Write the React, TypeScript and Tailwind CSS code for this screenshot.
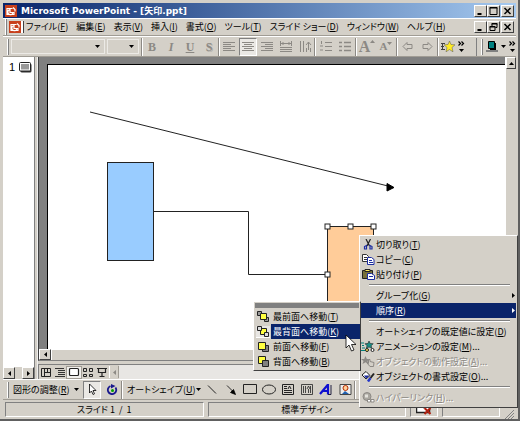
import React from "react";

const MENUS = [
  ["ファイル", "F"],
  ["編集", "E"],
  ["表示", "V"],
  ["挿入", "I"],
  ["書式", "O"],
  ["ツール", "T"],
  ["スライド ショー", "D"],
  ["ウィンドウ", "W"],
  ["ヘルプ", "H"],
];

const ICONS: Record<string, React.ReactNode> = {
  left: <path d="M1 1.5h12M1 3.5h8M1 5.5h12M1 7.5h8M1 9.5h12" stroke="#8c8984" />,
  center: <path d="M1 1.5h12M3 3.5h8M1 5.5h12M3 7.5h8M1 9.5h12" stroke="#8c8984" />,
  right: <path d="M1 1.5h12M5 3.5h8M1 5.5h12M5 7.5h8M1 9.5h12" stroke="#8c8984" />,
  spread: <path d="M1.5 0v5M12.5 0v5M2 2.5h10M4 1v3M10 1v3M1 6.5h12M1 8.5h12M1 10.5h12" stroke="#8c8984" />,
  vertical: <path d="M2.5 0v11M5.5 0v11M8.5 7v4M12.5 7v4M8 4l2.5-3L13 4M10.5 1v8" stroke="#8c8984" />,
  numbers: <path d="M2.5 0v3M1 5h3M1 9h3M6 1.5h7M6 5.5h7M6 9.5h7" stroke="#8c8984" />,
  bullets: <path d="M1 1.5h3M1 5.5h3M1 9.5h3M6 1.5h7M6 5.5h7M6 9.5h7" stroke="#8c8984" strokeWidth="1.3" />,
  prev: <path d="M2 5.5L6 1.5v2h5v4H6v2z" stroke="#8c8984" />,
  next: <path d="M12 5.5L8 1.5v2H3v4h5v2z" stroke="#8c8984" />,
  star: (
    <>
      <path d="M0 2.5h4M0 5.5h3M0 8.5h4M1.5 2v7" stroke="#404040" />
      <path
        d="M8.5 0l1.5 3.5 4 .3-3 2.7 1 4.3-3.500-2.300L5 10.800l1-4.300-3-2.700 4-.3z"
        fill="#ffec24"
        stroke="#555"
        strokeWidth=".5"
      />
    </>
  ),
  shadow: (
    <>
      <path d="M5 2h6v7H5z" fill="#000" />
      <path d="M3.5.5h6v7h-6z" fill="#008080" stroke="#000" />
      <path d="M1 10h12" stroke="#808080" strokeWidth="2" />
    </>
  ),
  pointer: <path d="M4.5 0v9l2-2 1.500 3.500 1.500-.7L8 6.500h3z" fill="#fff" stroke="#000" strokeWidth=".8" />,
  rotate: (
    <>
      <path d="M10.500 3.500a4.200 4.200 0 1 1-5-1.500" stroke="#18188c" strokeWidth="1.800" />
      <path d="M6 0l4.500 2L6 4.500z" fill="#18188c" />
      <circle cx="7.500" cy="6.500" r="1.500" fill="#00a000" />
    </>
  ),
  line: <path d="M3 1.5l8 8" stroke="#222" />,
  arrowLine: <path d="M3 1.5l6 6M11.500 10.500L6.500 8.500l3-3z" fill="#000" stroke="#000" strokeWidth=".8" />,
  rect: <path d="M.5.5h13v9H.5z" stroke="#222" />,
  oval: <ellipse cx="7" cy="5.5" rx="6.5" ry="4.5" stroke="#222" />,
  textBox: <path d="M1.5.5h11v10h-11zM3 8.5h8M3 6.5h8M3 4.5h3M3 2.5h3M7 5l1.500-3L10 5" stroke="#222" />,
  verticalBox: (
    <path d="M1.5.5h11v10h-11zM3.5 2v7M5.5 2v7M7 5l1.500-3L10 5M8.500 5v4M10.500 2v7" stroke="#222" strokeWidth=".8" />
  ),
  wordArt: (
    <>
      <path d="M1 10L9 .5v10M4 7h5" stroke="#1010d0" strokeWidth="2.2" />
      <path d="M12 1v9.5H9" stroke="#202040" />
    </>
  ),
  clip: (
    <>
      <path d="M2 .5h11v10H2z" fill="#eee" stroke="#444" />
      <circle cx="7.5" cy="4" r="2.5" fill="#ffcf9b" stroke="#b72d00" />
      <path d="M4 10l3-3 4 3z" fill="#2060b0" />
    </>
  ),
  cut: (
    <>
      <path d="M5 0l3.5 7M9.5 0L6 7" stroke="#222" strokeWidth="1.2" />
      <path d="M5.5 6.5L3.5 7.5v2.5h2zM9 6.5l2 1v2.5H9z" stroke="#1c2ca0" strokeWidth="1.2" />
    </>
  ),
  copy: (
    <>
      <path d="M1.5.5h4l2 2v5h-6zM3 3.5h3M3 5.5h3" fill="#fff" stroke="#333" />
      <path d="M6.5 3.5h4l2.500 2v5H6.500zM8 6.500h3M8 8.500h4" fill="#fff" stroke="#1c2ca0" />
    </>
  ),
  paste: (
    <>
      <path d="M1.5 1.5h10v8h-10z" fill="#77703a" stroke="#222" />
      <path d="M4 .5h5v2H4z" fill="#ffe95a" stroke="#222" />
      <path d="M6.5 4.5h4l3 2v4h-7zM8 7.5h4" fill="#fff" stroke="#1c2ca0" />
    </>
  ),
  animate: (
    <>
      <path d="M0 2h3M1 4.5h2M0 9.5h4M1 7h3" stroke="#00807a" strokeWidth="1.2" />
      <path
        d="M8 0l1.200 2.500 3 .2-2 2 .6 2.600L8 6 5.400 7.300 6 4.700 4 2.700l3-.2z"
        fill="#1b8f86"
        stroke="#222"
        strokeWidth=".6"
      />
      <circle cx="6" cy="9" r="1.5" fill="#ffe95a" stroke="#222" />
      <circle cx="11.5" cy="9" r="1.5" fill="#fff" stroke="#222" />
    </>
  ),
  action: (
    <>
      <path d="M4.5 0l1.300 3h3.200L6.500 5l1 3-3-1.800L1.500 8l1-3L0 3h3.200z" fill="#8c8984" />
      <path d="M7.5 3.5v4L6 7l3 3.500h3.500l.5-4-4-1v-2z" fill="#d4d0c8" stroke="#8c8984" />
    </>
  ),
  format: (
    <>
      <path d="M1 4l4-3.5 4 4L5 8z" fill="#fff" stroke="#222" />
      <path d="M3 4.5l2 3 3.500-3z" fill="#1c2ca0" />
      <path d="M13 2.5L9.5 7" stroke="#222" strokeWidth="2" />
      <path d="M9.5 7L7 10.5" stroke="#2436c8" strokeWidth="2.5" />
    </>
  ),
  link: (
    <>
      <circle cx="6" cy="4.5" r="4" fill="#aaa7a0" stroke="#8c8984" />
      <path d="M4 2.5h3v3H4z" fill="#e4e2dc" />
      <path d="M6.5 7.5h3v2.500h-3zM10 7.500h3v2.500h-3z" fill="#fff" stroke="#8c8984" />
    </>
  ),
  front: (
    <>
      <path d="M1.5.5h4v4h-4zM8.5 6.5h4v4h-4z" fill="#999" stroke="#222" />
      <path d="M4.5 2.5h6v6h-6z" fill="#ffff40" stroke="#222" />
    </>
  ),
  back: (
    <>
      <path d="M4.5 2.5h6v6h-6z" fill="#ffff40" stroke="#222" />
      <path d="M1.5.5h4v4h-4zM8.5 6.5h4v4h-4z" fill="#ddd" stroke="#222" />
    </>
  ),
  forward: (
    <>
      <path d="M6.5 4.5h6v6h-6z" fill="#808080" stroke="#222" />
      <path d="M2.5 1.5h7v7h-7z" fill="#ffff40" stroke="#222" />
    </>
  ),
  backward: (
    <>
      <path d="M2.5.5h7v7h-7z" fill="#ffff40" stroke="#222" />
      <path d="M6.5 4.5h6v6h-6z" fill="#808080" stroke="#222" />
    </>
  ),
  normalView: <path d="M2.5 1.5h9v8h-9zM5.5 2v7M6 5.5h6M8.5 2v3" stroke="#222" />,
  outlineView: <path d="M2 1.5h9M5 3.5h7M5 5.5h7M5 7.5h7M2 9.5h10" stroke="#333" />,
  slideView: <rect x="2.5" y="1.5" width="9" height="7" rx="1" fill="#fff" stroke="#222" strokeWidth="1.2" />,
  sorterView: <path d="M2.5 1.5h3v3h-3zM8.5 1.5h3v3h-3zM2.5 7.5h3v2h-3zM8.5 7.5h3v2h-3z" stroke="#222" />,
  showView: <path d="M2 1.5h10M3.5 1v4.500h7V1M7 6v3M4.500 9.500h5" stroke="#222" strokeWidth="1.2" />,
};

const Icon = ({ name }: { name: string }) => (
  <svg viewBox="0 0 14 11" fill="none" className="h-[11px] w-3.5 shrink-0">
    {ICONS[name]}
  </svg>
);

const Label = ({ text, hotkey, tail = "" }: { text: string; hotkey: string; tail?: string }) => (
  <span className="whitespace-nowrap">
    {text}(<u>{hotkey}</u>){tail}
  </span>
);

const AppIcon = () => (
  <svg viewBox="0 0 12 12" className="size-3 shrink-0">
    <rect width="12" height="12" fill="#c8401c" />
    <path
      d="M2 3.5h5.5M2 3v6.5h7V7M5 4.5v3h3a2.6 2.6 0 1 1-3-3zM8 2.5l2 2v2"
      fill="none"
      stroke="#fff"
      strokeWidth="1.2"
    />
  </svg>
);

const raised = "border border-t-white border-l-white border-r-[#404040] border-b-[#404040] bg-[#d4d0c8]";
const bar = "flex items-center border-t border-b border-t-white border-b-[#a09c94]";

const WindowButtons = ({ restore = false }: { restore?: boolean }) => (
  <div className="ml-auto flex shrink-0 items-center">
    <button aria-label="最小化" className={`h-3 w-[13px] ${raised}`}>
      <svg viewBox="0 0 10 10" className="size-full">
        <path d="M2 8h4" stroke="#000" strokeWidth="2" />
      </svg>
    </button>
    <button aria-label="元に戻す" className={`h-3 w-[13px] ${raised}`}>
      <svg viewBox="0 0 10 10" className="size-full" fill="none" stroke="#000">
        {restore ? (
          <path d="M3.5 4V1.5h5v4H7M1.5 4.5h5v4h-5zM1 5h6M3 2h6" />
        ) : (
          <path d="M1.5 1.5h7v7h-7zM1 2h8" />
        )}
      </svg>
    </button>
    <button aria-label="閉じる" className={`ml-px h-3 w-[13px] ${raised}`}>
      <svg viewBox="0 0 10 10" className="size-full">
        <path d="M2 2l6 6M8 2l-6 6" stroke="#000" strokeWidth="1.5" />
      </svg>
    </button>
  </div>
);

const Grip = () => <span className="h-4 w-0.5 shrink-0 border-r border-l border-r-[#808080] border-l-white" />;
const Divider = () => <span className="h-[18px] w-0.5 shrink-0 border-r border-l border-r-white border-l-[#8c8984]" />;

const Caret = ({ dir = "down", color = "#000" }: { dir?: "down" | "up" | "left" | "right"; color?: string }) => (
  <svg viewBox="0 0 5 5" className="size-[5px] shrink-0" fill={color}>
    {dir === "down" && <path d="M0 1h5L2.5 4z" />}
    {dir === "up" && <path d="M0 4h5L2.5 1z" />}
    {dir === "left" && <path d="M4 0v5L1 2.5z" />}
    {dir === "right" && <path d="M1 0v5l3-2.5z" />}
  </svg>
);

const More = () => (
  <button aria-label="その他のボタン" className="flex w-2 shrink-0 flex-col items-center gap-0.5">
    <svg viewBox="0 0 7 5" className="h-[5px] w-[7px]" fill="none" stroke="#000">
      <path d="M.5.5l2 2-2 2M3.5.5l2 2-2 2" strokeWidth="1.2" />
    </svg>
    <Caret />
  </button>
);

const Tool = ({ name, label, pressed = false }: { name: string; label: string; pressed?: boolean }) => (
  <button
    aria-label={label}
    aria-pressed={pressed}
    className={`flex h-[18px] w-[18px] shrink-0 items-center justify-center border ${
      pressed ? "border-t-[#808080] border-r-white border-b-white border-l-[#808080] bg-[#eae8e4]" : "border-transparent"
    }`}
  >
    <Icon name={name} />
  </button>
);

const Combo = ({ label, className }: { label: string; className: string }) => (
  <div className={`relative h-[15px] border border-[#eceae6] ${className}`}>
    <select aria-label={label} className="block size-full appearance-none bg-transparent" />
    <span className="pointer-events-none absolute top-1 right-1">
      <Caret />
    </span>
  </div>
);

const FormatToolbar = () => (
  <div className={`${bar} h-[21px] shrink-0`}>
    <div className="flex items-center gap-0.5 pl-1">
      <Grip />
      <Combo label="フォント" className="w-[94px]" />
      <Combo label="フォント サイズ" className="mr-0.5 w-8" />
    </div>
    <Divider />
    <div className="flex gap-px font-['Liberation_Serif',serif] text-xs leading-none font-bold text-[#8c8984]">
      <button className="w-[18px]">B</button>
      <button className="w-[18px] italic">I</button>
      <button className="w-[18px] underline">U</button>
      <button className="w-[18px] [text-shadow:1px_1px_0_#b5b2ac]">S</button>
    </div>
    <Divider />
    <div className="flex gap-px">
      <Tool name="left" label="左揃え" />
      <Tool name="center" label="中央揃え" pressed />
      <Tool name="right" label="右揃え" />
      <Tool name="spread" label="均等割り付け" />
      <Tool name="vertical" label="文字列の方向" />
    </div>
    <Divider />
    <div className="flex gap-px px-px">
      <Tool name="numbers" label="段落番号" />
      <Tool name="bullets" label="箇条書き" />
    </div>
    <Divider />
    <div className="flex items-center gap-px px-px font-['Liberation_Serif',serif] font-bold text-[#8c8984]">
      <button className="flex w-[18px] justify-center text-base leading-none">
        A
        <Caret dir="up" color="#8c8984" />
      </button>
      <button className="flex w-[18px] justify-center text-[11px] leading-none">
        A
        <Caret color="#8c8984" />
      </button>
    </div>
    <Divider />
    <div className="flex gap-px px-px">
      <Tool name="prev" label="レベル上げ" />
      <Tool name="next" label="レベル下げ" />
    </div>
    <Divider />
    <div className="flex items-center">
      <Tool name="star" label="アニメーション効果" />
      <More />
    </div>
    <div className="ml-auto flex items-center border-l border-[#808080] pl-1">
      <Grip />
      <Tool name="shadow" label="影" />
      <Caret />
      <span className="pl-0.5">
        <More />
      </span>
    </div>
  </div>
);

const Handle = ({ x, y }: { x: number; y: number }) => (
  <rect x={x - 2} y={y - 2} width="5" height="5" fill="#fff" stroke="#222" />
);

const Slide = () => (
  <svg className="block size-full" fill="none" stroke="#222">
    <path d="M42 47l298 74" />
    <path d="M339 118.5l7 4-7 3.5z" fill="#000" stroke="#000" />
    <rect x="59.5" y="97.5" width="46" height="98" fill="#99ccff" />
    <path d="M105.5 146.5h95v63h79" />
    <rect x="279.5" y="161.5" width="46" height="96" fill="#ffcc99" />
    <Handle x={279} y={161} />
    <Handle x={302} y={161} />
    <Handle x={325} y={161} />
    <Handle x={279} y={209} />
  </svg>
);

const Workspace = () => (
  <div className="flex min-h-0 flex-1">
    <div className="flex w-[31px] shrink-0 flex-col bg-white">
      <div className="flex flex-1 items-start gap-1 pt-1 pl-1.5 font-['Liberation_Sans',sans-serif] text-[11px] leading-3">
        1
        <svg viewBox="0 0 13 11" className="mt-px h-[11px] w-[13px] shrink-0">
          <rect x="1.5" y="1.5" width="11" height="9" rx="1.5" fill="#333" />
          <rect x=".5" y=".5" width="11" height="8.5" rx="1" fill="#fff" stroke="#222" />
          <rect x="2" y="2" width="8" height="5.5" fill="#999" />
        </svg>
      </div>
      <div className="flex h-3 justify-between bg-[#d4d0c8]">
        <button aria-label="左へ" className={`flex w-3 items-center justify-center ${raised}`}>
          <Caret dir="left" />
        </button>
        <button aria-label="右へ" className={`flex w-3 items-center justify-center ${raised}`}>
          <Caret dir="right" />
        </button>
      </div>
    </div>
    <div className="w-1 shrink-0 border-r border-l border-r-[#eee] border-l-[#808080]" />
    <div className="flex min-w-0 flex-1 flex-col">
      <div className="flex min-h-0 flex-1 border-l border-[#404040]">
        <div className="min-w-0 flex-1 bg-[#808080] pt-[7px] pl-2">
          <div className="h-full border-t border-l border-black bg-white">
            <Slide />
          </div>
        </div>
        <div className="w-[11px] shrink-0 border-l border-white bg-[#d4d0c8]">
          <button aria-label="上へ" className={`flex h-3 w-full items-center justify-center ${raised}`}>
            <Caret dir="up" />
          </button>
        </div>
      </div>
      <div className="flex h-3 border-b border-l border-b-[#808080] border-l-[#404040]">
        <button aria-label="左へ" className={`flex w-3 items-center justify-center ${raised}`}>
          <Caret dir="left" />
        </button>
        <div className="flex-1 border-t border-l border-white" />
      </div>
      <div className="h-1 border-b border-[#808080]" />
      <div className="flex h-[14px] items-center border-l border-[#808080] bg-[#e8e6e3]">
        <div className="flex h-full items-center bg-[#d4d0c8]">
          <button aria-label="標準表示">
            <Icon name="normalView" />
          </button>
          <button aria-label="アウトライン表示">
            <Icon name="outlineView" />
          </button>
          <button aria-label="スライド表示" className="bg-[#f0efec] outline outline-[#a09c94]">
            <Icon name="slideView" />
          </button>
          <button aria-label="スライド一覧">
            <Icon name="sorterView" />
          </button>
          <button aria-label="スライド ショー">
            <Icon name="showView" />
          </button>
          <button
            aria-label="前へ"
            className="flex h-3 w-2.5 items-center justify-center border-r border-l border-r-[#a09c94] border-l-white"
          >
            <Caret dir="left" color="#8c8984" />
          </button>
        </div>
      </div>
    </div>
  </div>
);

const DrawToolbar = () => (
  <div className={`${bar} h-[21px] shrink-0`}>
    <div className="flex items-center gap-0.5 pl-1">
      <Grip />
      <button className="flex w-[70px] items-center justify-between px-0.5">
        <Label text="図形の調整" hotkey="R" />
        <Caret />
      </button>
      <Tool name="pointer" label="オブジェクトの選択" pressed />
      <Tool name="rotate" label="自由に回転" />
    </div>
    <Divider />
    <button className="flex w-20 shrink-0 items-center justify-between px-1">
      <Label text="オートシェイプ" hotkey="U" />
      <Caret />
    </button>
    <div className="flex gap-px">
      <Tool name="line" label="直線" />
      <Tool name="arrowLine" label="矢印" />
      <Tool name="rect" label="四角形" />
      <Tool name="oval" label="楕円" />
      <Tool name="textBox" label="テキスト ボックス" />
      <Tool name="verticalBox" label="縦書きテキスト ボックス" />
      <Tool name="wordArt" label="ワードアート" />
      <Tool name="clip" label="クリップアート" />
    </div>
    <Divider />
  </div>
);

const sunken =
  "flex h-[15px] items-center justify-center border border-t-[#808080] border-l-[#808080] border-r-white border-b-white";

const StatusBar = () => (
  <div className="flex h-[19px] shrink-0 items-center gap-1 px-0.5">
    <div className={`${sunken} w-[39%] whitespace-pre`}>スライド 1  /  1</div>
    <div className={`${sunken} w-[39%]`}>標準デザイン</div>
    <div className={`${sunken} w-7`}>
      <svg viewBox="0 0 16 11" className="h-[11px] w-4">
        <path d="M.5 2.5h6l1 1 1-1h5v6H.5z" fill="#fff" stroke="#222" strokeWidth="1.5" />
        <path d="M8.5 4l6 6M14.5 4l-6 6" stroke="#b02010" strokeWidth="2" />
      </svg>
    </div>
    <div className={`${sunken} flex-1`} />
    <svg viewBox="0 0 10 10" className="size-2.5 shrink-0 self-end" stroke="#808080">
      <path d="M1 10l9-9M4 10l6-6M7 10l3-3" />
    </svg>
  </div>
);

type ItemProps = {
  text: string;
  hotkey: string;
  tail?: string;
  icon?: string;
  arrow?: boolean;
  active?: boolean;
  disabled?: boolean;
};

const MenuItem = ({ text, hotkey, tail, icon, arrow, active, disabled }: ItemProps) => (
  <button
    role="menuitem"
    disabled={disabled}
    className={`flex h-[15px] w-full items-center text-left ${
      active ? "bg-[#0a246a] text-white" : disabled ? "text-[#8c8984] [text-shadow:1px_1px_0_#fff]" : ""
    }`}
  >
    <span className="w-[15px] shrink-0">{icon && <Icon name={icon} />}</span>
    <Label text={text} hotkey={hotkey} tail={tail} />
    {arrow && (
      <span className="ml-auto">
        <Caret dir="right" color={active ? "#fff" : "#000"} />
      </span>
    )}
  </button>
);

const Separator = () => (
  <div role="separator" className="flex h-[6px] items-center pr-1.5 pl-2">
    <span className="h-0.5 w-full border-t border-b border-t-[#808080] border-b-white" />
  </div>
);

const ORDER = [
  { text: "最前面へ移動", hotkey: "T", icon: "front" },
  { text: "最背面へ移動", hotkey: "K", icon: "back", active: true },
  { text: "前面へ移動", hotkey: "F", icon: "forward" },
  { text: "背面へ移動", hotkey: "B", icon: "backward" },
];

const OrderMenu = () => (
  <div role="menu" className={`absolute -top-0.5 right-full w-[108px] pb-px ${raised}`}>
    <div className="m-px h-[5px] bg-[#808080]" />
    {ORDER.map((item) => (
      <button key={item.hotkey} role="menuitem" className="flex h-[15px] w-full items-center gap-px pl-0.5 text-left">
        <span className={item.active ? "border-b border-white bg-[#e8e6e3]" : ""}>
          <Icon name={item.icon} />
        </span>
        <span className={`flex h-full flex-1 items-center pl-0.5 ${item.active ? "bg-[#0a246a] text-white" : ""}`}>
          <Label text={item.text} hotkey={item.hotkey} />
        </span>
      </button>
    ))}
    <svg viewBox="0 0 12 18" className="absolute top-8 left-[91px] h-[18px] w-3">
      <path d="M1 1v13l3-3 2.5 6 2.5-1-2.500-5.500H11z" fill="#fff" stroke="#000" strokeWidth=".8" />
    </svg>
  </div>
);

const ContextMenu = () => (
  <div role="menu" className={`absolute top-[235px] right-0 left-[359px] px-px pt-px pb-0.5 ${raised}`}>
    <MenuItem text="切り取り" hotkey="T" icon="cut" />
    <MenuItem text="コピー" hotkey="C" icon="copy" />
    <MenuItem text="貼り付け" hotkey="P" icon="paste" />
    <Separator />
    <MenuItem text="グループ化" hotkey="G" arrow />
    <div className="relative">
      <MenuItem text="順序" hotkey="R" arrow active />
      <OrderMenu />
    </div>
    <Separator />
    <MenuItem text="オートシェイプの既定値に設定" hotkey="D" />
    <MenuItem text="アニメーションの設定" hotkey="M" tail="..." icon="animate" />
    <MenuItem text="オブジェクトの動作設定" hotkey="A" tail="..." icon="action" disabled />
    <MenuItem text="オブジェクトの書式設定" hotkey="O" tail="..." icon="format" />
    <Separator />
    <MenuItem text="ハイパーリンク" hotkey="H" tail="..." icon="link" disabled />
  </div>
);

export default function App() {
  return (
    <div className="relative flex h-screen flex-col overflow-hidden border-r-2 border-b-2 border-[#606060] bg-[#d4d0c8] pt-[3px] pr-0.5 pl-[3px] font-['Noto_Sans_CJK_JP',sans-serif] text-[9px] leading-3 text-black [font-feature-settings:'palt']">
      <header className="flex h-[15px] shrink-0 items-center gap-1 bg-linear-to-r from-[#0a246a] to-[#a6caf0] px-0.5">
        <AppIcon />
        <h1 className="font-['DejaVu_Sans','Noto_Sans_CJK_JP',sans-serif] text-[9px] font-bold whitespace-nowrap text-white">
          Microsoft PowerPoint - [矢印.ppt]
        </h1>
        <WindowButtons />
      </header>
      <nav className={`${bar} h-[18px] shrink-0 px-0.5`}>
        <Grip />
        <span className="mx-0.5 flex border-r border-[#404040] bg-white pr-0.5">
          <AppIcon />
        </span>
        <div className="flex gap-2">
          {MENUS.map(([text, key]) => (
            <button key={key}>
              <Label text={text} hotkey={key} />
            </button>
          ))}
        </div>
        <WindowButtons restore />
      </nav>
      <FormatToolbar />
      <Workspace />
      <DrawToolbar />
      <StatusBar />
      <ContextMenu />
    </div>
  );
}
